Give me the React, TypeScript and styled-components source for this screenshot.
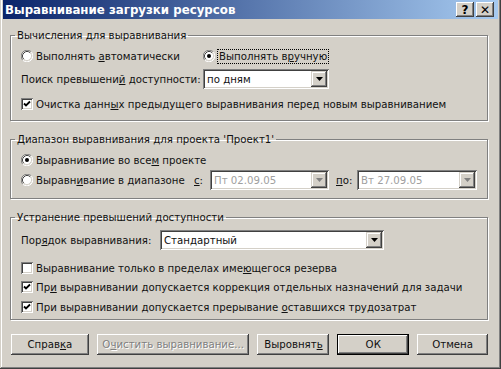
import React from 'react';
import styled, { createGlobalStyle } from 'styled-components';

const GlobalStyle = createGlobalStyle`
  html, body { margin: 0; padding: 0; background: #d4d0c8; }
  body {
    font-family: Tahoma, "DejaVu Sans", "Noto Sans", sans-serif;
    font-size: 10.2px;
    color: #111;
  }
  * { box-sizing: border-box; }
`;

const Window = styled.div`
  width: 501px;
  height: 369px;
  background: #d4d0c8;
  padding: 0 3px 3px 3px;
  box-shadow: inset -1px -1px #404040, inset 1px 0 #d4d0c8,
    inset -2px -2px #808080, inset 2px 0 #fff;
  display: flex;
  flex-direction: column;
`;

const TitleBar = styled.div`
  height: 19px;
  display: flex;
  align-items: center;
  padding: 0 4px 0 2px;
  background: linear-gradient(to right, #0a246a, #a6caf0);
  color: #fff;
  font-weight: bold;
  font-size: 11.8px;
  > span { flex: 1; }
`;

const CapButton = styled.div`
  width: 18px;
  height: 15px;
  margin-left: 2px;
  background: #d4d0c8;
  box-shadow: inset -1px -1px #404040, inset 1px 1px #fff,
    inset -2px -2px #808080, inset 2px 2px #d4d0c8;
  display: flex;
  align-items: center;
  justify-content: center;
  color: #000;
  font-weight: bold;
  font-size: 12px;
  line-height: 1;
`;

const Content = styled.div`
  flex: 1;
  padding: 10px 10px 0 7px;
  display: flex;
  flex-direction: column;
`;

const Group = styled.fieldset<{ $mt?: number; $pb: number }>`
  margin: ${p => p.$mt ?? 0}px 0 0 0;
  padding: 0 8px ${p => p.$pb}px 10px;
  border: 1px solid #808080;
  box-shadow: 1px 1px 0 #fff, inset 1px 1px 0 #fff;
  display: flex;
  flex-direction: column;
  min-width: 0;
`;

const Legend = styled.legend`
  margin-left: -6px;
  padding: 0 2px;
  line-height: 13px;
`;

const Row = styled.div<{ $mt: number; $h: number }>`
  margin-top: ${p => p.$mt}px;
  height: ${p => p.$h}px;
  display: flex;
  align-items: center;
  white-space: nowrap;
`;

const Option = styled.label<{ $w?: number }>`
  display: flex;
  align-items: center;
  gap: 3px;
  ${p => (p.$w ? `width: ${p.$w}px;` : '')}
`;

const Label = styled.span<{ $w?: number; $ml?: number }>`
  ${p => (p.$w ? `width: ${p.$w}px;` : '')}
  margin-left: ${p => p.$ml ?? 0}px;
`;

const Focus = styled.span`
  outline: 1px dotted #000;
  outline-offset: 0;
  padding: 1px 1px;
`;

const Check = styled.span`
  width: 12px;
  height: 12px;
  background: #fff;
  box-shadow: inset 1px 1px #808080, inset -1px -1px #fff,
    inset 2px 2px #404040, inset -2px -2px #d4d0c8;
  display: inline-flex;
  align-items: center;
  justify-content: center;
  flex: none;
`;

const Combo = styled.div<{ $w: number; $disabled?: boolean }>`
  width: ${p => p.$w}px;
  height: 20px;
  background: #fff;
  padding: 2px;
  box-shadow: inset 1px 1px #808080, inset -1px -1px #fff,
    inset 2px 2px #404040, inset -2px -2px #d4d0c8;
  display: flex;
  align-items: stretch;
  color: ${p => (p.$disabled ? '#a0a0a0' : '#111')};
  > span {
    flex: 1;
    padding-left: 2px;
    display: flex;
    align-items: center;
  }
`;

const DropButton = styled.div`
  width: 16px;
  background: #d4d0c8;
  box-shadow: inset -1px -1px #404040, inset 1px 1px #d4d0c8,
    inset -2px -2px #808080, inset 2px 2px #fff;
  display: flex;
  align-items: center;
  justify-content: center;
`;

const Buttons = styled.div`
  margin-top: 14px;
  display: flex;
  gap: 8px;
  padding-left: 1px;
`;

const Button = styled.div<{ $w: number; $disabled?: boolean; $default?: boolean }>`
  width: ${p => p.$w}px;
  height: 21px;
  background: #d4d0c8;
  display: flex;
  align-items: center;
  justify-content: center;
  box-shadow: ${p =>
    p.$default
      ? 'inset 0 0 0 1px #000, inset -2px -2px #404040, inset 2px 2px #fff, inset -3px -3px #808080'
      : 'inset -1px -1px #404040, inset 1px 1px #fff, inset -2px -2px #808080, inset 2px 2px #d4d0c8'};
  color: ${p => (p.$disabled ? '#808080' : '#111')};
  text-shadow: ${p => (p.$disabled ? '1px 1px 0 #fff' : 'none')};
  white-space: nowrap;
`;

function Radio({ checked }: { checked?: boolean }) {
  return (
    <svg width="12" height="12" viewBox="0 0 12 12" style={{ flex: 'none' }}>
      <circle cx="6" cy="6" r="5" fill="#fff" />
      <path d="M1.76 10.24 A6 6 0 0 1 10.24 1.76" stroke="#808080" strokeWidth="1" fill="none" />
      <path d="M10.24 1.76 A6 6 0 0 1 1.76 10.24" stroke="#fff" strokeWidth="1" fill="none" />
      <path d="M2.82 9.18 A4.5 4.5 0 0 1 9.18 2.82" stroke="#404040" strokeWidth="1" fill="none" />
      <path d="M9.18 2.82 A4.5 4.5 0 0 1 2.82 9.18" stroke="#d4d0c8" strokeWidth="1" fill="none" />
      {checked && <circle cx="6" cy="6" r="2" fill="#000" />}
    </svg>
  );
}

function CheckBox({ checked }: { checked?: boolean }) {
  return (
    <Check>
      {checked && (
        <svg width="8" height="8" viewBox="0 0 8 8">
          <path d="M1 3.5 L3 5.5 L7 1.5" stroke="#000" strokeWidth="1.8" fill="none" />
        </svg>
      )}
    </Check>
  );
}

function ComboBox({ w, value, disabled }: { w: number; value: string; disabled?: boolean }) {
  return (
    <Combo $w={w} $disabled={disabled}>
      <span>{value}</span>
      <DropButton>
        <svg width="7" height="4" viewBox="0 0 7 4">
          <path d="M0 0 H7 L3.5 4 Z" fill={disabled ? '#808080' : '#000'} />
        </svg>
      </DropButton>
    </Combo>
  );
}

export default function App() {
  return (
    <>
      <GlobalStyle />
      <Window>
        <TitleBar>
          <span>Выравнивание загрузки ресурсов</span>
          <CapButton>?</CapButton>
          <CapButton>✕</CapButton>
        </TitleBar>
        <Content>
          <Group $pb={9}>
            <Legend>Вычисления для выравнивания</Legend>
            <Row $mt={6} $h={16}>
              <Option $w={182}>
                <Radio />
                <span>Выполнять <u>а</u>втоматически</span>
              </Option>
              <Option>
                <Radio checked />
                <Focus>Выполнять в<u>р</u>учную</Focus>
              </Option>
            </Row>
            <Row $mt={5} $h={20}>
              <Label $w={182}>Поиск превышени<u>й</u> доступности:</Label>
              <ComboBox w={126} value="по дням" />
            </Row>
            <Row $mt={8} $h={14}>
              <Option>
                <CheckBox checked />
                <span>Очистка данн<u>ы</u>х предыдущего выравнивания перед новым выравниванием</span>
              </Option>
            </Row>
          </Group>

          <Group $mt={12} $pb={8}>
            <Legend>Диапазон выравнивания для проекта 'Проект1'</Legend>
            <Row $mt={6} $h={16}>
              <Option>
                <Radio checked />
                <span>Выравнивание во все<u>м</u> проекте</span>
              </Option>
            </Row>
            <Row $mt={2} $h={20}>
              <Option $w={173}>
                <Radio />
                <span>Выравн<u>и</u>вание в диапазоне</span>
              </Option>
              <Label $w={16}><u>с</u>:</Label>
              <ComboBox w={119} value="Пт 02.09.05" disabled />
              <Label $w={21} $ml={7}><u>п</u>о:</Label>
              <ComboBox w={120} value="Вт 27.09.05" disabled />
            </Row>
          </Group>

          <Group $mt={12} $pb={5}>
            <Legend>Устранение превышений доступности</Legend>
            <Row $mt={6} $h={20}>
              <Label $w={139}>Пор<u>я</u>док выравнивания:</Label>
              <ComboBox w={224} value="Стандартный" />
            </Row>
            <Row $mt={11} $h={14}>
              <Option>
                <CheckBox />
                <span>Выравнивание только в пределах име<u>ю</u>щегося резерва</span>
              </Option>
            </Row>
            <Row $mt={5} $h={14}>
              <Option>
                <CheckBox checked />
                <span>Пр<u>и</u> выравнивании допускается коррекция отдельных назначений для задачи</span>
              </Option>
            </Row>
            <Row $mt={6} $h={14}>
              <Option>
                <CheckBox checked />
                <span>При выравнивании допускается прерывание <u>о</u>ставшихся трудозатрат</span>
              </Option>
            </Row>
          </Group>

          <Buttons>
            <Button $w={78}>Справ<u>к</u>а</Button>
            <Button $w={153} $disabled>О<u>ч</u>истить выравнивание...</Button>
            <Button $w={72}>Выровнят<u>ь</u></Button>
            <Button $w={72} $default>ОК</Button>
            <Button $w={71}>Отмена</Button>
          </Buttons>
        </Content>
      </Window>
    </>
  );
}
